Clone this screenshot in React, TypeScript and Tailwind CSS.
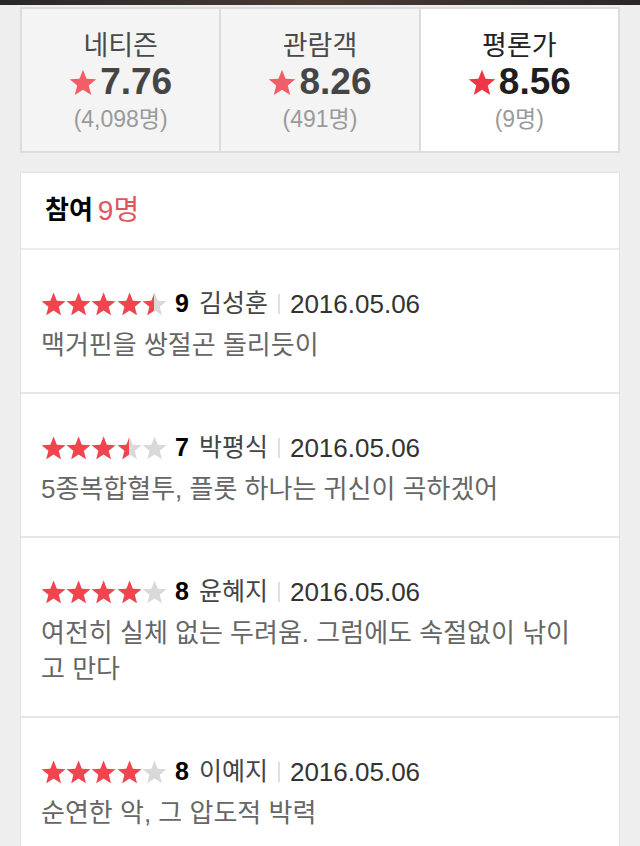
import React from 'react';

const FONT = "font-['Liberation_Sans','Noto_Sans_CJK_KR',sans-serif]";

// fatter five-point star, close to the glyph used on the page
const STAR_PATH =
  'M12 0.5L15.06 8.29L23.41 8.79L16.95 14.11L19.05 22.21L12 17.7L4.95 22.21L7.05 14.11L0.59 8.79L8.94 8.29Z';

interface Tab {
  label: string;
  score: string;
  count: string;
  active?: boolean;
}

interface Review {
  score: number;
  name: string;
  date: string;
  text: string;
}

const tabs: Tab[] = [
  { label: '네티즌', score: '7.76', count: '(4,098명)' },
  { label: '관람객', score: '8.26', count: '(491명)' },
  { label: '평론가', score: '8.56', count: '(9명)', active: true },
];

const reviews: Review[] = [
  { score: 9, name: '김성훈', date: '2016.05.06', text: '맥거핀을 쌍절곤 돌리듯이' },
  { score: 7, name: '박평식', date: '2016.05.06', text: '5종복합혈투, 플롯 하나는 귀신이 곡하겠어' },
  { score: 8, name: '윤혜지', date: '2016.05.06', text: '여전히 실체 없는 두려움. 그럼에도 속절없이 낚이고 만다' },
  { score: 8, name: '이예지', date: '2016.05.06', text: '순연한 악, 그 압도적 박력' },
];

const Star: React.FC<{ className: string }> = ({ className }) => (
  <svg viewBox="0 0 24 23" className={className}>
    <path d={STAR_PATH} fill="currentColor" />
  </svg>
);

const StarRow: React.FC<{ score: number }> = ({ score }) => (
  <div className="relative w-[126px] h-[24px] shrink-0">
    <div className="flex text-[#d9d9d9]">
      {[0, 1, 2, 3, 4].map(i => (
        <Star key={i} className="w-[25.2px] h-[24px] shrink-0" />
      ))}
    </div>
    <div
      className="absolute top-0 left-0 h-full overflow-hidden"
      style={{ width: `${score * 10}%` }}
    >
      <div className="flex text-[#f2444f] w-[126px]">
        {[0, 1, 2, 3, 4].map(i => (
          <Star key={i} className="w-[25.2px] h-[24px] shrink-0" />
        ))}
      </div>
    </div>
  </div>
);

const App: React.FC = () => {
  return (
    <div className={`${FONT} min-h-[846px] bg-[#eeeeee]`}>
      <div className="h-[5px] bg-gradient-to-r from-[#29272b] via-[#4a3a32] to-[#2a2629]" />

      <div className="px-5 pt-[2px]">
        <div className="flex border-2 border-[#dcdcdc] bg-[#f4f4f4]">
          {tabs.map((tab, i) => (
            <div
              key={tab.label}
              className={`flex-1 h-[142px] flex flex-col items-center pt-[19px] ${
                i > 0 ? 'border-l-2 border-[#dcdcdc]' : ''
              } ${tab.active ? 'bg-white' : ''}`}
            >
              <span className={`text-[27px] leading-[36px] ${tab.active ? 'text-[#222]' : 'text-[#4a4a4a]'}`}>
                {tab.label}
              </span>
              <div className="flex items-center h-[36px]">
                <Star
                  className={`w-[28px] h-[27px] mr-[3px] ${
                    tab.active ? 'text-[#ef3645]' : 'text-[#f25e68]'
                  }`}
                />
                <span
                  className={`text-[37px] font-bold ${
                    tab.active ? 'text-[#1e1e1e]' : 'text-[#454545]'
                  }`}
                >
                  {tab.score}
                </span>
              </div>
              <span className="text-[23px] leading-[38px] text-[#9a9a9a]">{tab.count}</span>
            </div>
          ))}
        </div>

        <div className="mt-[19px] bg-white border border-[#e2e2e2]">
          <div className="h-[77px] px-6 flex items-center border-b-2 border-[#ececec]">
            <span className="text-[26px] font-bold text-black">참여</span>
            <span className="text-[28px] text-[#e2555f] ml-[5px]">9명</span>
          </div>

          {reviews.map((r, i) => (
            <div
              key={r.name}
              className={`pl-5 pr-[30px] pt-[36px] pb-[29px] ${
                i < reviews.length - 1 ? 'border-b-2 border-[#e6e6e6]' : ''
              }`}
            >
              <div className="flex items-center h-[36px]">
                <StarRow score={r.score} />
                <span className="ml-[8px] text-[25px] font-bold text-black">{r.score}</span>
                <span className="ml-[10px] text-[25px] text-[#444]">{r.name}</span>
                <span className="mx-[10px] w-[2px] h-[20px] bg-[#e0e0e0]" />
                <span className="text-[26px] text-[#333]">{r.date}</span>
              </div>
              <p className="mt-[5px] text-[26px] leading-[36px] text-[#666] break-all">{r.text}</p>
            </div>
          ))}
        </div>
      </div>
    </div>
  );
};

export default App;
